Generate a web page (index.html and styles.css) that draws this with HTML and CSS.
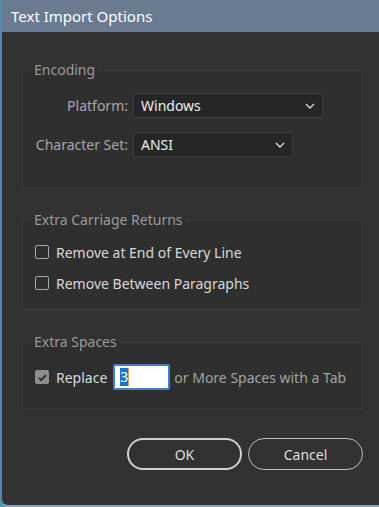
FILE: index.html
```html
<!DOCTYPE html>
<html lang="en">
<head>
  <meta charset="UTF-8" />
  <title>Text Import Options</title>
  <link rel="stylesheet" href="styles.css">
</head>
<body>
  <div class="window">
    <div class="titlebar">Text Import Options</div>

    <div class="content">
      <fieldset class="group group-encoding">
        <legend>Encoding</legend>
        <div class="field">
          <label>Platform:</label>
          <div class="select select-wide">
            <span>Windows</span>
            <svg width="10" height="6" viewBox="0 0 10 6"><path d="M1 1l4 4 4-4" fill="none" stroke="#d8d8d8" stroke-width="1.4"/></svg>
          </div>
        </div>
        <div class="field">
          <label>Character Set:</label>
          <div class="select select-narrow">
            <span>ANSI</span>
            <svg width="10" height="6" viewBox="0 0 10 6"><path d="M1 1l4 4 4-4" fill="none" stroke="#d8d8d8" stroke-width="1.4"/></svg>
          </div>
        </div>
      </fieldset>

      <fieldset class="group group-returns">
        <legend>Extra Carriage Returns</legend>
        <div class="check-row"><span class="box"></span>Remove at End of Every Line</div>
        <div class="check-row"><span class="box"></span>Remove Between Paragraphs</div>
      </fieldset>

      <fieldset class="group group-spaces">
        <legend>Extra Spaces</legend>
        <div class="check-row">
          <span class="box checked">
            <svg width="11" height="11" viewBox="0 0 11 11"><path d="M2 5.8l2.3 2.3L9 3.2" fill="none" stroke="#2e2e2e" stroke-width="1.8"/></svg>
          </span>
          Replace
          <div class="num-input"><span class="sel">3</span><span class="caret"></span></div>
          <span class="muted">or More Spaces with a Tab</span>
        </div>
      </fieldset>

      <div class="buttons">
        <button class="btn btn-primary">OK</button>
        <button class="btn">Cancel</button>
      </div>
    </div>
  </div>
</body>
</html>
```

FILE: styles.css
```css
* { box-sizing: border-box; }
html { background: #4a9bb0; }
body {
  margin: 0;
  font-family: 'Noto Sans', 'Open Sans', sans-serif;
  font-size: 14px;
  color: #d6d6d6;
}
.window {
  height: 507px;
  background: #323232;
  border-left: 2px solid #5a86ab;
  border-bottom: 2px solid #8ea2b8;
  border-bottom-left-radius: 8px;
  overflow: hidden;
}
.titlebar {
  height: 32px;
  line-height: 32px;
  padding-left: 9px;
  background: #6a7a90;
  color: #fff;
  font-size: 15px;
}
.content { padding: 0 16px 0 20px; }

.group {
  margin: 0;
  border: 1px solid #3b3b3b;
  border-radius: 2px;
  background: #2f2f2f;
  padding: 0;
}
.group legend {
  margin-left: 8px;
  padding: 0 3px;
  line-height: 16px;
  color: #9a9a9a;
  font-size: 14px;
}
.group-encoding { margin-top: 30px; padding: 15px 0 30px; }
.group-returns { margin-top: 24px; padding: 14px 0 16px; }
.group-spaces { margin-top: 24px; padding: 14px 0 18px; }

.field {
  display: flex;
  align-items: center;
  gap: 5px;
}
.field + .field { margin-top: 14px; }
.field label {
  width: 105px;
  text-align: right;
  color: #a8a8a8;
}
.select {
  height: 25px;
  display: flex;
  align-items: center;
  justify-content: space-between;
  padding: 0 7px 0 7px;
  background: #262626;
  border: 1px solid #3d3d3d;
  border-radius: 2px;
  color: #ececec;
}
.select-wide { width: 190px; }
.select-narrow { width: 160px; }

.check-row {
  display: flex;
  align-items: center;
  height: 20px;
  padding-left: 12px;
  color: #d8d8d8;
}
.check-row + .check-row { margin-top: 11px; }
.group-spaces .check-row { height: 26px; }
.box {
  width: 14px;
  height: 14px;
  margin-right: 7px;
  border: 1.5px solid #a4a4a4;
  border-radius: 2px;
  display: flex;
  align-items: center;
  justify-content: center;
}
.box.checked { background: #8e8e8e; border-color: #8e8e8e; }
.num-input {
  width: 57px;
  height: 26px;
  margin: 0 4px 0 6px;
  display: flex;
  align-items: center;
  padding-left: 5px;
  background: #fff;
  border: 2px solid #3f80d4;
  border-radius: 2px;
}
.sel {
  background: #1e6fd9;
  color: #fff;
  line-height: 18px;
}
.caret {
  width: 1px;
  height: 18px;
  background: #e0a040;
}
.muted { color: #a2a2a2; }

.buttons {
  display: flex;
  justify-content: flex-end;
  gap: 6px;
  margin-top: 29px;
}
.btn {
  width: 115px;
  height: 32px;
  border-radius: 16px;
  background: transparent;
  border: 1.5px solid #bdbdbd;
  color: #dedede;
  font-family: inherit;
  font-size: 14px;
}
.btn-primary { border: 2px solid #cfcfcf; }
```
